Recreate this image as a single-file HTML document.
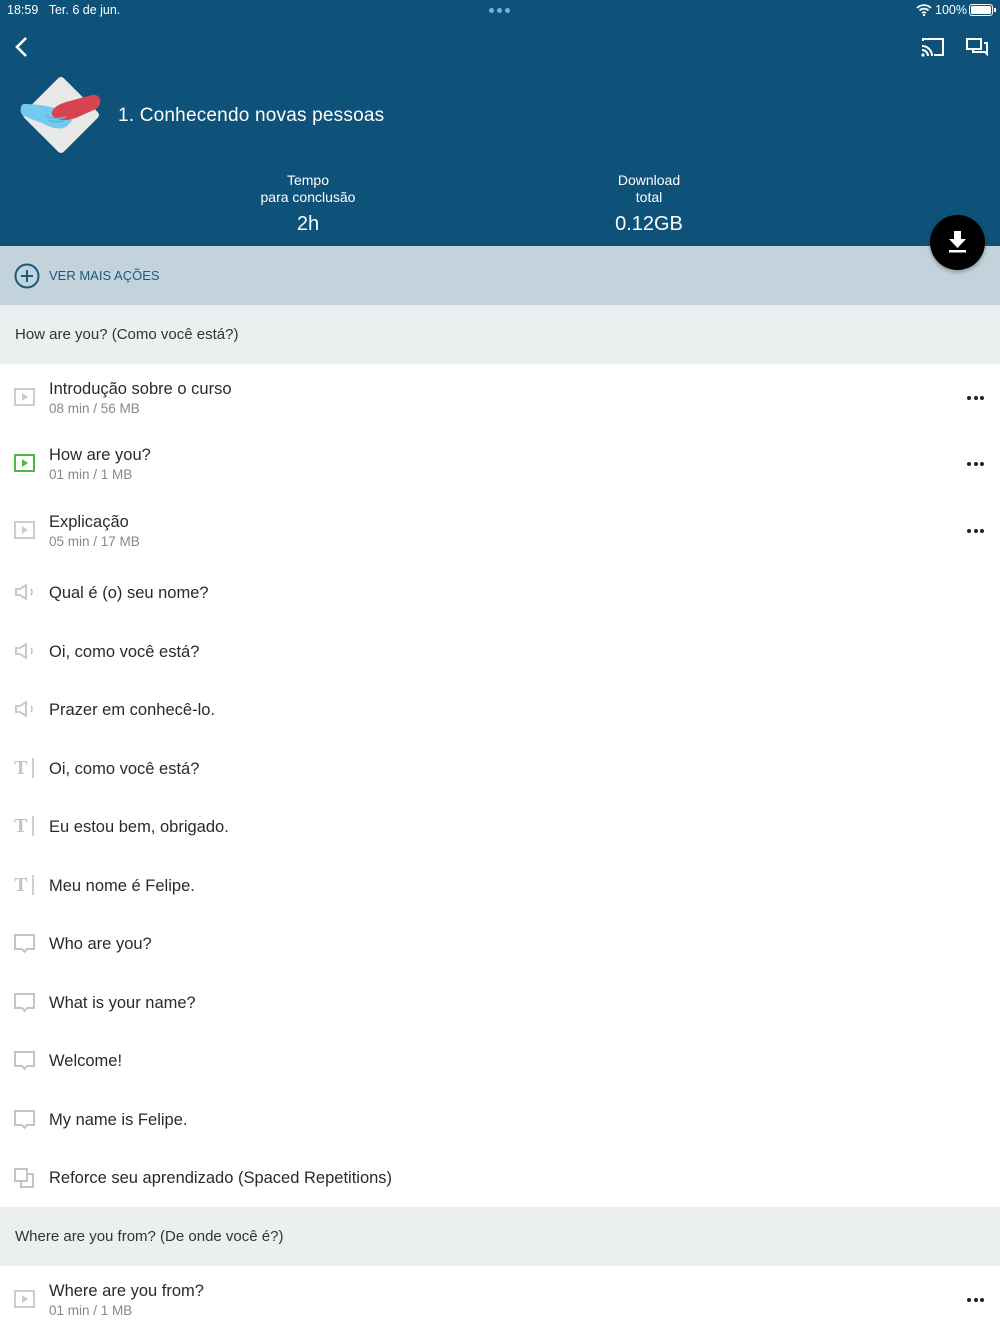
<!DOCTYPE html>
<html><head><meta charset="utf-8"><style>
*{margin:0;padding:0;box-sizing:border-box}
body{width:1000px;height:1334px;overflow:hidden;background:#fff;font-family:"Liberation Sans",sans-serif;color:#222;position:relative}
.hdr{position:absolute;left:0;top:0;width:1000px;height:246px;background:#0e5279;color:#fff}
.abs{position:absolute}
.band{position:absolute;left:0;top:246px;width:1000px;height:59px;background:#c3d3dc}
.sec{position:absolute;left:0;width:1000px;height:59px;background:#eceff0;font-size:15px;color:#333;padding-left:15px;line-height:59px}
.row{position:absolute;left:0;width:1000px}
.row .t{position:absolute;left:49px;font-size:16.5px;color:#2a2a2a}
.row .s{position:absolute;left:49px;font-size:13.5px;color:#888}
.row svg.ic{position:absolute;left:14px}
.dots{position:absolute;left:967px;width:20px;height:5px;display:flex;gap:2.5px}
.dots i{display:block;width:4px;height:4px;border-radius:2px;background:#222}
</style></head><body>
<div class="hdr">
 <div class="abs" style="left:7px;top:3px;font-size:12.5px">18:59&nbsp;&nbsp;&nbsp;Ter. 6 de jun.</div>
 <div class="abs" style="left:489px;top:8px;width:24px;height:5px;display:flex;gap:3px">
  <i style="display:block;width:5px;height:5px;border-radius:3px;background:#7fb3d5"></i><i style="display:block;width:5px;height:5px;border-radius:3px;background:#7fb3d5"></i><i style="display:block;width:5px;height:5px;border-radius:3px;background:#7fb3d5"></i></div>
 <svg class="abs" style="left:916px;top:4px" width="16" height="12" viewBox="0 0 16 12"><path d="M1 4a10 10 0 0 1 14 0M3.5 6.5a6.5 6.5 0 0 1 9 0M6 9a3 3 0 0 1 4 0" stroke="#fff" stroke-width="1.8" fill="none"/><circle cx="8" cy="11" r="1.2" fill="#fff"/></svg>
 <div class="abs" style="left:935px;top:3px;font-size:12.5px">100%</div>
 <div class="abs" style="left:969px;top:4px;width:24px;height:12px;border:1.5px solid #fff;border-radius:3px;padding:1px"><div style="background:#fff;width:100%;height:100%;border-radius:1px"></div></div>
 <div class="abs" style="left:994px;top:8px;width:2px;height:4px;background:#fff"></div>
 <svg class="abs" style="left:14px;top:36px" width="16" height="22" viewBox="0 0 16 22"><path d="M12 2L3 11l9 9" stroke="#fff" stroke-width="2.6" fill="none"/></svg>
 <svg class="abs" style="left:921px;top:37px" width="24" height="20" viewBox="0 0 24 20"><path d="M2 4V2h20v16h-9" stroke="#fff" stroke-width="2" fill="none"/><path d="M1 9a10 10 0 0 1 10 10M1 13a6 6 0 0 1 6 6" stroke="#fff" stroke-width="2" fill="none"/><circle cx="2" cy="18" r="1.6" fill="#fff"/></svg>
 <svg class="abs" style="left:965px;top:37px" width="24" height="20" viewBox="0 0 24 20"><path d="M2 2h14v10H6l-4 0z" stroke="#fff" stroke-width="2" fill="none"/><path d="M19 6h3v11l-2 -2H8v-3" stroke="#fff" stroke-width="2" fill="none"/></svg>
 <svg class="abs" style="left:18px;top:76px" width="86" height="80" viewBox="0 0 86 80">
  <rect x="15" y="11" width="56" height="56" rx="4" fill="#e8e8e8" transform="rotate(45 43 39)"/>
  <path d="M6 28c-4 0-5 10 0 12l20 8c8 4 16 6 22 3l6-6-8-10c-10-4-26-7-40-7z" fill="#74c9ee"/>
  <path d="M34 36c2-6 10-9 18-11l22-6c8-2 12 8 4 14l-18 8c-6 3-14 4-20 2-5-2-7-4-6-7z" fill="#d8434f"/>
  <path d="M28 40c6 3 14 3 20 1M30 44c6 2 12 2 16 1" stroke="#5fb3dd" stroke-width="1.5" fill="none"/>
 </svg>
 <div class="abs" style="left:118px;top:105px;font-size:19px;letter-spacing:.2px">1. Conhecendo novas pessoas</div>
 <div class="abs" style="left:208px;top:172px;width:200px;text-align:center;font-size:14px;line-height:17px">Tempo<br>para conclusão</div>
 <div class="abs" style="left:208px;top:213px;width:200px;text-align:center;font-size:20px">2h</div>
 <div class="abs" style="left:549px;top:172px;width:200px;text-align:center;font-size:14px;line-height:17px">Download<br>total</div>
 <div class="abs" style="left:549px;top:213px;width:200px;text-align:center;font-size:20px">0.12GB</div>
</div>
<div class="band">
 <svg class="abs" style="left:14px;top:17px" width="26" height="26" viewBox="0 0 26 26"><circle cx="13" cy="13" r="11.5" stroke="#1a5a7f" stroke-width="2" fill="none"/><path d="M13 7v12M7 13h12" stroke="#1a5a7f" stroke-width="2"/></svg>
 <div class="abs" style="left:49px;top:22px;font-size:13px;color:#1a5a7f">VER MAIS AÇÕES</div>
</div>
<div class="abs" style="left:930px;top:215px;width:55px;height:55px;border-radius:50%;background:#000;box-shadow:0 2px 4px rgba(0,0,0,.3)">
 <svg style="position:absolute;left:17px;top:15px" width="21" height="24" viewBox="0 0 21 24"><path d="M7 1h7v8h5L10.5 18 2 9h5z" fill="#fff"/><rect x="2" y="20" width="17" height="2.5" fill="#fff"/></svg>
</div>
<div class="sec" style="top:305px">How are you? (Como você está?)</div>

<div class="row" style="top:364px;height:66px"><svg class="ic" style="top:24px" width="21" height="18"><rect x="1" y="1" width="19" height="16" fill="none" stroke="#ccc" stroke-width="2"/><path d="M8 5v8l6-4z" fill="#ccc"/></svg><div class="t" style="top:16px">Introdução sobre o curso</div><div class="s" style="top:37px">08 min / 56 MB</div><div class="dots" style="top:32px"><i></i><i></i><i></i></div></div>
<div class="row" style="top:430px;height:67px"><svg class="ic" style="top:24px" width="21" height="18"><rect x="1" y="1" width="19" height="16" fill="none" stroke="#4cb944" stroke-width="2"/><path d="M8 5v8l6-4z" fill="#4cb944"/></svg><div class="t" style="top:16px">How are you?</div><div class="s" style="top:37px">01 min / 1 MB</div><div class="dots" style="top:32px"><i></i><i></i><i></i></div></div>
<div class="row" style="top:497px;height:66px"><svg class="ic" style="top:24px" width="21" height="18"><rect x="1" y="1" width="19" height="16" fill="none" stroke="#ccc" stroke-width="2"/><path d="M8 5v8l6-4z" fill="#ccc"/></svg><div class="t" style="top:16px">Explicação</div><div class="s" style="top:37px">05 min / 17 MB</div><div class="dots" style="top:32px"><i></i><i></i><i></i></div></div>

<div class="row" style="top:563px"><svg class="ic" style="top:20px" width="22" height="18"><path d="M2 6h4l6-4v14l-6-4H2z" fill="none" stroke="#c4c4c4" stroke-width="1.8"/><path d="M17 6q2 3 0 6" stroke="#c4c4c4" stroke-width="1.5" fill="none"/></svg><div class="t" style="top:21px">Qual é (o) seu nome?</div></div>
<div class="row" style="top:621.5px"><svg class="ic" style="top:20px" width="22" height="18"><path d="M2 6h4l6-4v14l-6-4H2z" fill="none" stroke="#c4c4c4" stroke-width="1.8"/><path d="M17 6q2 3 0 6" stroke="#c4c4c4" stroke-width="1.5" fill="none"/></svg><div class="t" style="top:21px">Oi, como você está?</div></div>
<div class="row" style="top:680px"><svg class="ic" style="top:20px" width="22" height="18"><path d="M2 6h4l6-4v14l-6-4H2z" fill="none" stroke="#c4c4c4" stroke-width="1.8"/><path d="M17 6q2 3 0 6" stroke="#c4c4c4" stroke-width="1.5" fill="none"/></svg><div class="t" style="top:21px">Prazer em conhecê-lo.</div></div>

<div class="row" style="top:738.5px"><div class="abs" style="left:14px;top:18px;font-family:'Liberation Serif',serif;font-size:20px;color:#c4c4c4;font-weight:bold">T</div><div class="abs" style="left:32px;top:19px;width:2px;height:20px;background:#d0d0d0"></div><div class="t" style="top:21px">Oi, como você está?</div></div>
<div class="row" style="top:797px"><div class="abs" style="left:14px;top:18px;font-family:'Liberation Serif',serif;font-size:20px;color:#c4c4c4;font-weight:bold">T</div><div class="abs" style="left:32px;top:19px;width:2px;height:20px;background:#d0d0d0"></div><div class="t" style="top:21px">Eu estou bem, obrigado.</div></div>
<div class="row" style="top:855.5px"><div class="abs" style="left:14px;top:18px;font-family:'Liberation Serif',serif;font-size:20px;color:#c4c4c4;font-weight:bold">T</div><div class="abs" style="left:32px;top:19px;width:2px;height:20px;background:#d0d0d0"></div><div class="t" style="top:21px">Meu nome é Felipe.</div></div>

<div class="row" style="top:914px"><svg class="ic" style="top:20px" width="22" height="20"><path d="M1 1h19v14H13l-2.5 3L8 15H1z" fill="none" stroke="#c4c4c4" stroke-width="2"/></svg><div class="t" style="top:21px">Who are you?</div></div>
<div class="row" style="top:972.5px"><svg class="ic" style="top:20px" width="22" height="20"><path d="M1 1h19v14H13l-2.5 3L8 15H1z" fill="none" stroke="#c4c4c4" stroke-width="2"/></svg><div class="t" style="top:21px">What is your name?</div></div>
<div class="row" style="top:1031px"><svg class="ic" style="top:20px" width="22" height="20"><path d="M1 1h19v14H13l-2.5 3L8 15H1z" fill="none" stroke="#c4c4c4" stroke-width="2"/></svg><div class="t" style="top:21px">Welcome!</div></div>
<div class="row" style="top:1089.5px"><svg class="ic" style="top:20px" width="22" height="20"><path d="M1 1h19v14H13l-2.5 3L8 15H1z" fill="none" stroke="#c4c4c4" stroke-width="2"/></svg><div class="t" style="top:21px">My name is Felipe.</div></div>
<div class="row" style="top:1148px"><svg class="ic" style="top:20px" width="22" height="20"><rect x="1" y="1" width="12" height="12" fill="none" stroke="#c4c4c4" stroke-width="2"/><path d="M13 6h6v13H7v-6" fill="none" stroke="#c4c4c4" stroke-width="2"/></svg><div class="t" style="top:21px">Reforce seu aprendizado (Spaced Repetitions)</div></div>

<div class="sec" style="top:1207px">Where are you from? (De onde você é?)</div>
<div class="row" style="top:1266px;height:68px"><svg class="ic" style="top:24px" width="21" height="18"><rect x="1" y="1" width="19" height="16" fill="none" stroke="#ccc" stroke-width="2"/><path d="M8 5v8l6-4z" fill="#ccc"/></svg><div class="t" style="top:16px">Where are you from?</div><div class="s" style="top:37px">01 min / 1 MB</div><div class="dots" style="top:32px"><i></i><i></i><i></i></div></div>
</body></html>
